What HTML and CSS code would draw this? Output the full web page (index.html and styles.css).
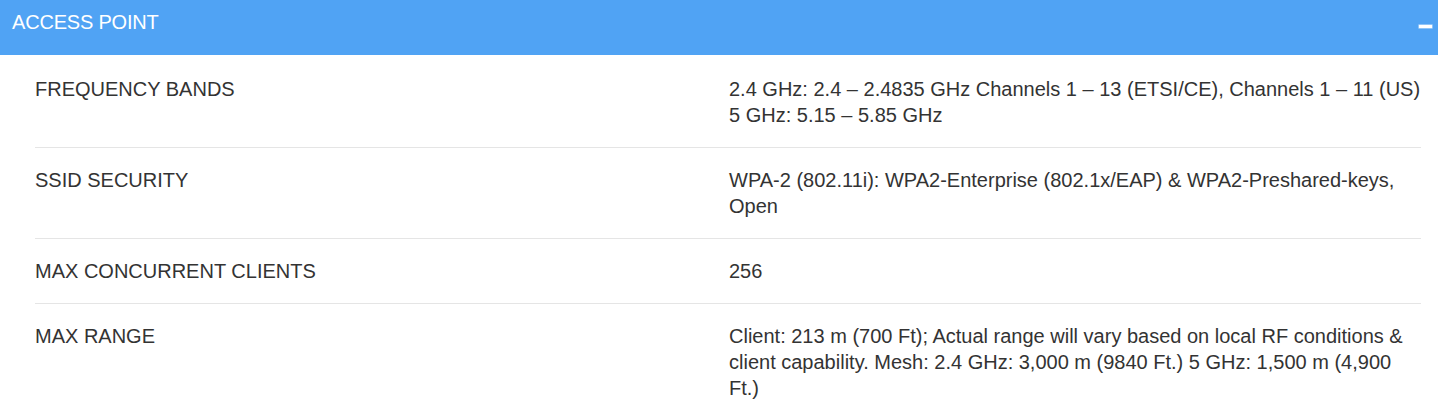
FILE: index.html
```html
<!DOCTYPE html>
<html lang="en">
<head>
<meta charset="utf-8">
<title>Access Point</title>
<link rel="stylesheet" href="styles.css">
</head>
<body>
<section class="panel">
  <header class="panel-head">
    <h2 class="panel-title">ACCESS POINT</h2>
    <span class="collapse-icon" aria-label="collapse"></span>
  </header>
  <div class="panel-body">
    <div class="spec-row">
      <div class="spec-label">FREQUENCY BANDS</div>
      <div class="spec-value">2.4 GHz: 2.4 – 2.4835 GHz Channels 1 – 13 (ETSI/CE), Channels 1 – 11 (US)<br>5 GHz: 5.15 – 5.85 GHz</div>
    </div>
    <div class="spec-row">
      <div class="spec-label">SSID SECURITY</div>
      <div class="spec-value">WPA-2 (802.11i): WPA2-Enterprise (802.1x/EAP) &amp; WPA2-Preshared-keys, Open</div>
    </div>
    <div class="spec-row">
      <div class="spec-label">MAX CONCURRENT CLIENTS</div>
      <div class="spec-value">256</div>
    </div>
    <div class="spec-row">
      <div class="spec-label">MAX RANGE</div>
      <div class="spec-value">Client: 213 m (700 Ft); Actual range will vary based on local RF conditions &amp; client capability. Mesh: 2.4 GHz: 3,000 m (9840 Ft.) 5 GHz: 1,500 m (4,900 Ft.)</div>
    </div>
  </div>
</section>
</body>
</html>
```
FILE: styles.css
```css
html, body {
  margin: 0;
  padding: 0;
  background: #ffffff;
}

body {
  font-family: "Liberation Sans", Arial, sans-serif;
  color: #333333;
  overflow: hidden;
}

.panel-head {
  height: 55px;
  box-sizing: border-box;
  background: #50a3f4;
  display: flex;
  align-items: flex-start;
  justify-content: space-between;
  padding: 0 6px 0 12px;
}

.panel-title {
  margin: 0;
  padding-top: 11px;
  font-size: 20px;
  line-height: 23px;
  font-weight: normal;
  color: #ffffff;
  letter-spacing: -0.2px;
}

.collapse-icon {
  display: block;
  width: 13px;
  height: 3px;
  margin-top: 25px;
  background: #ffffff;
  box-shadow: 0 0 0 0.6px rgba(255, 255, 255, 0.6);
}

.panel-body {
  padding: 2px 17px 0 35px;
}

.spec-row {
  display: grid;
  grid-template-columns: 694px 1fr;
  padding: 19px 0;
  border-bottom: 1px solid #e5e5e5;
  font-size: 20px;
  line-height: 26px;
}

.spec-row:last-child {
  border-bottom: none;
}
```
